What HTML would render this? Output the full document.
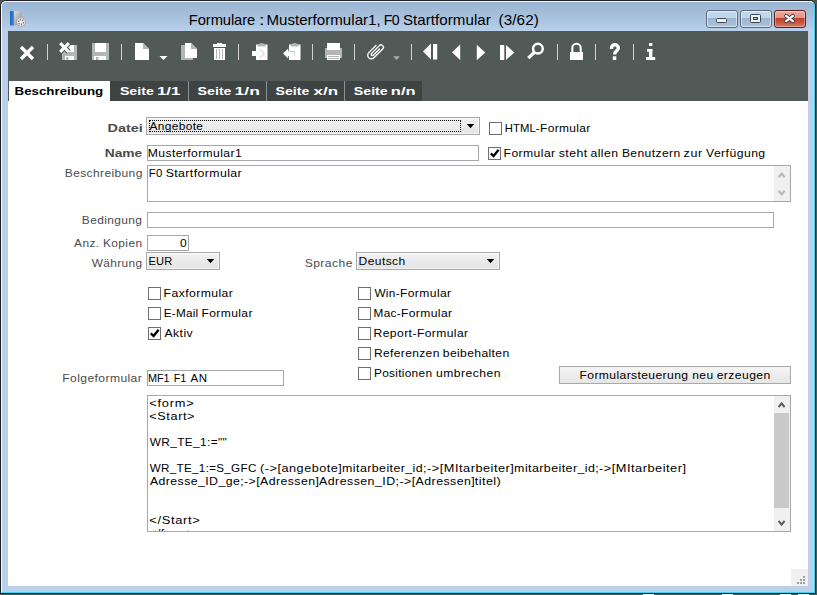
<!DOCTYPE html>
<html><head><meta charset="utf-8"><style>
*{box-sizing:border-box}
html,body{margin:0;padding:0}
body{width:817px;height:595px;overflow:hidden;position:relative;background:#4f5856;font-family:"Liberation Sans",sans-serif}
.a{position:absolute}
#win{left:0;top:0;width:816px;height:594px;border:1px solid #202020;border-radius:6px 6px 0 0;background:#b9d1ea;overflow:hidden}
#hl{left:0;top:0;width:814px;height:592px;border:1px solid #f4f8fc;border-right-color:#3ad6f4;border-bottom-color:#3ad6f4;border-radius:5px 5px 0 0;background:linear-gradient(#99b4d1 0px,#a9c2de 16px,#b9d1ea 30px,#b9d1ea 100%)}
#tb{left:8px;top:31px;width:800px;height:70px;background:#525a58}
#content{left:8px;top:101px;width:800px;height:485px;background:#fff}
.tab{position:absolute;top:81px;height:20px;background:#3e4444}
.t{position:absolute;white-space:pre;transform-origin:0 0}
.inp{position:absolute;background:#fff;border:1px solid #a4a7ad}
.sel{position:absolute;border:1px solid #a8a8a8;background:linear-gradient(#f2f2f2,#e3e3e3);box-shadow:inset 0 0 0 1px rgba(255,255,255,0.55)}
.cb{position:absolute;width:13px;height:13px;border:1px solid #6f6f6f;background:#fff}
</style></head><body>
<div id="win" class="a"><div id="hl" class="a"></div></div>
<!-- caption buttons -->
<div class="a" style="left:706px;top:10px;width:32px;height:18px;border:1px solid #5b6a80;border-radius:3px;overflow:hidden;background:linear-gradient(#c5d8ed 0,#c0d4ea 7px,#9cb5d1 7px,#a8c0da 14px,#b5cce4 17px)"><div class="a" style="left:0;top:0;width:30px;height:16px;border:1px solid rgba(255,255,255,0.55);border-radius:2px"></div></div>
<div class="a" style="left:740px;top:10px;width:32px;height:18px;border:1px solid #5b6a80;border-radius:3px;overflow:hidden;background:linear-gradient(#c5d8ed 0,#c0d4ea 7px,#9cb5d1 7px,#a8c0da 14px,#b5cce4 17px)"><div class="a" style="left:0;top:0;width:30px;height:16px;border:1px solid rgba(255,255,255,0.55);border-radius:2px"></div></div>
<div class="a" style="left:774px;top:10px;width:32px;height:18px;border:1px solid #5e1f1f;border-radius:3px;overflow:hidden;background:linear-gradient(#eaab9f 0,#e39282 7px,#c0402a 7px,#c65239 11px,#d98370 17px)"><div class="a" style="left:0;top:0;width:30px;height:16px;border:1px solid rgba(255,255,255,0.35);border-radius:2px"></div></div>
<svg class="a" style="left:700px;top:8px" width="110" height="22">
<rect x="16.5" y="10.5" width="10" height="4" rx="1" fill="#f2f0ec" stroke="#3e4656" stroke-width="1"/>
<rect x="50.5" y="6.5" width="10" height="8" rx="1" fill="#f2f0ec" stroke="#3e4656" stroke-width="1"/>
<rect x="53.5" y="9.5" width="4" height="2" fill="#9cb5d1" stroke="#3e4656" stroke-width="1"/>
<path d="M86.1,7.9 L92.9,13.1 M92.9,7.9 L86.1,13.1" stroke="#3c3a48" stroke-width="3.9" stroke-linecap="round"/><path d="M86.1,7.9 L92.9,13.1 M92.9,7.9 L86.1,13.1" stroke="#f6f6f6" stroke-width="2.4" stroke-linecap="round"/>

</svg>
<!-- app icon -->
<svg class="a" style="left:8px;top:9px" width="20" height="20">
<defs><linearGradient id="pg" x1="0" x2="1" y1="0" y2="1"><stop offset="0" stop-color="#dcdcdc"/><stop offset="1" stop-color="#8c8c8c"/></linearGradient>
<linearGradient id="bl" x1="0" x2="1"><stop offset="0" stop-color="#1d64b8"/><stop offset="1" stop-color="#3a8ee0"/></linearGradient></defs>
<rect x="2" y="2" width="4" height="14.5" rx="0.8" fill="url(#bl)"/>
<rect x="6" y="2" width="8" height="14" fill="url(#pg)"/>
<circle cx="13" cy="13" r="4.4" fill="#dcdcdc" stroke="#a0a0a0" stroke-width="1.3" stroke-dasharray="1.6,1.15"/><circle cx="13" cy="13" r="3.6" fill="#e6e6e6"/><circle cx="15.29" cy="13.71" r="0.75" fill="#6e6e6e"/><circle cx="13.53" cy="15.34" r="0.75" fill="#6e6e6e"/><circle cx="11.24" cy="14.63" r="0.75" fill="#6e6e6e"/><circle cx="10.71" cy="12.29" r="0.75" fill="#6e6e6e"/><circle cx="12.47" cy="10.66" r="0.75" fill="#6e6e6e"/><circle cx="14.76" cy="11.37" r="0.75" fill="#6e6e6e"/><circle cx="13" cy="13" r="0.9" fill="#f8f8f8"/>
</svg>


<div id="tb" class="a"></div>
<div id="content" class="a"></div>
<svg class="a" style="left:0;top:0" width="817" height="100" viewBox="0 0 817 100" shape-rendering="geometricPrecision">
<g fill="#fff">
<!-- X close -->
<path d="M21,47 L33,59 M33,47 L21,59" stroke="#fff" stroke-width="3.3" fill="none"/>
<!-- delete save: disk -->
<rect x="62" y="45" width="15" height="15" fill="#b3b6b5"/>
<rect x="64.5" y="45" width="9.5" height="7" fill="#fff"/>
<rect x="65" y="56" width="9" height="4" fill="#fff"/>
<rect x="66" y="57" width="2.5" height="3" fill="#b3b6b5"/>
<path d="M60.2,43.2 L68.8,51.8 M68.8,43.2 L60.2,51.8" stroke="#525a58" stroke-width="5.4" fill="none"/>
<path d="M60.2,43.2 L68.8,51.8 M68.8,43.2 L60.2,51.8" stroke="#fff" stroke-width="3.1" fill="none"/>
<!-- save -->
<rect x="92" y="43" width="17" height="17" fill="#b3b6b5"/>
<rect x="95" y="43" width="11" height="9" fill="#fff"/>
<rect x="94" y="56" width="12" height="4" fill="#fff"/>
<rect x="96" y="57" width="2.5" height="3" fill="#b3b6b5"/>
<!-- new doc -->
<path d="M135,43 H143 L149,49 V60 H135 Z"/>
<path d="M143,43 L149,49 H143 Z" fill="#b3b6b5"/>
<path d="M159.5,56 H167.5 L163.5,60 Z"/>
<!-- copy -->
<rect x="181" y="45" width="12" height="15" fill="#b3b6b5"/>
<path d="M185,43 H191 L197,49 V58 H185 Z"/>
<path d="M191,43 L197,49 H191 Z" fill="#b3b6b5"/>
<!-- trash -->
<rect x="213" y="44" width="13" height="3"/>
<rect x="217" y="43" width="5" height="1.5"/>
<rect x="214" y="48" width="11" height="12"/>
<rect x="216" y="49" width="1" height="10" fill="#b3b6b5"/>
<rect x="219" y="49" width="1" height="10" fill="#b3b6b5"/>
<rect x="222" y="49" width="1" height="10" fill="#b3b6b5"/>
<!-- import -->
<rect x="256" y="44.5" width="11.5" height="15.5"/>
<path d="M257.8,46.6 V45.2 Q258.3,43.4 261.6,43 Q264.9,43.4 265.4,45.2 V46.6 Z" fill="#b3b6b5"/>
<path d="M252,51 H259 V48.3 L264.7,53.5 L259,58.5 V56 H252 Z" stroke="#d6d8d7" stroke-width="0"/>
<path d="M259.5,48.8 L264.5,53.5 L259.5,58" stroke="#c8cac9" stroke-width="1" fill="none"/>
<!-- export -->
<rect x="289" y="44.5" width="11.5" height="15.5"/>
<path d="M290.8,46.6 V45.2 Q291.3,43.4 294.6,43 Q297.9,43.4 298.4,45.2 V46.6 Z" fill="#b3b6b5"/>
<path d="M283,53.5 L288.2,48.5 V51 H295 V56 H288.2 V58.5 Z"/>
<path d="M288.5,51.5 H294.5 V55.5" stroke="#c8cac9" stroke-width="1" fill="none"/>
<!-- printer -->
<rect x="325" y="48" width="17" height="10" fill="#b3b6b5"/>
<rect x="327" y="43" width="13" height="7"/>
<rect x="327" y="55" width="13" height="5"/>
<rect x="328" y="56" width="11" height="1" fill="#b3b6b5"/>
<rect x="328" y="58" width="11" height="1" fill="#b3b6b5"/>
<!-- paperclip -->
<path d="M375.97,45.47 L368.79,52.64 A3.6,3.6 0 0 0 373.88,57.74 L382.69,48.93 A2.35,2.35 0 0 0 379.36,45.61 L371.51,53.46 A1.25,1.25 0 0 0 373.28,55.23 L379.50,49.00" stroke="#fff" stroke-width="1.3" fill="none" stroke-linecap="round"/>
<path d="M393,56.2 H400 L396.5,60 Z" fill="#a6aaa9"/>
<!-- first -->
<path d="M423,51.5 L431,43.5 V59.5 Z"/>
<rect x="433" y="44" width="4.2" height="15.5"/>
<!-- prev -->
<path d="M452,52.3 L460.2,44.6 V60 Z"/>
<!-- next -->
<path d="M476.8,44.7 L485.2,52.5 L476.8,60.3 Z"/>
<!-- last -->
<rect x="500" y="45" width="4.3" height="15"/>
<path d="M506,45 L514.3,52.4 L506,60 Z"/>
<!-- search -->
<circle cx="537.9" cy="48.7" r="4.85" stroke="#fff" stroke-width="2.5" fill="none"/>
<path d="M534.4,52.2 L528.3,58.1" stroke="#fff" stroke-width="3.3" fill="none"/>
<!-- lock -->
<rect x="570" y="52" width="13" height="8"/>
<path d="M572.3,52.5 V48 A4.2,4.2 0 0 1 580.7,48 V52.5" stroke="#fff" stroke-width="2.1" fill="none"/>
<!-- question -->
<path d="M611.5,49 V47.9 A3.4,3.2 0 0 1 618.3,47.9 C618.3,50.6 614.6,51 614.6,54.4" stroke="#fff" stroke-width="3.4" fill="none"/>
<rect x="612.8" y="56.3" width="3.5" height="3.7"/>
<!-- info -->
<rect x="649" y="43" width="3.3" height="3"/>
<rect x="647" y="49" width="5.3" height="2.8"/>
<rect x="649" y="49" width="3.3" height="8.5"/>
<rect x="646" y="57" width="9.2" height="3"/>
</g>
<g fill="#d2d4d3">
<rect x="47" y="44" width="1" height="16"/>
<rect x="121" y="44" width="1" height="16"/>
<rect x="238" y="44" width="1" height="16"/>
<rect x="312" y="44" width="1" height="16"/>
<rect x="354" y="44" width="1" height="16"/>
<rect x="411" y="44" width="1" height="16"/>
<rect x="557" y="44" width="1" height="16"/>
<rect x="595" y="44" width="1" height="16"/>
<rect x="633" y="44" width="1" height="16"/>
</g>
</svg>

<div class="tab" style="left:9px;width:101px;background:#fff"></div>
<div class="tab" style="left:110px;width:78px"></div>
<div class="a" style="left:188px;top:81px;width:1px;height:20px;background:#8b9090"></div>
<div class="tab" style="left:189px;width:77px"></div>
<div class="a" style="left:266px;top:81px;width:1px;height:20px;background:#8b9090"></div>
<div class="tab" style="left:267px;width:77px"></div>
<div class="a" style="left:344px;top:81px;width:1px;height:20px;background:#8b9090"></div>
<div class="tab" style="left:345px;width:77px"></div>

<div class="sel" style="left:146px;top:117px;width:334px;height:18px"></div>
<div class="a" style="left:149px;top:120px;width:312px;height:12px;border:1px dotted #000"></div>
<svg class="a" style="left:466px;top:123px" width="10" height="6"><path d="M0.8,1 H8.2 L4.5,5.2 Z" fill="#000"/></svg>
<div class="cb" style="left:489px;top:122px"></div>

<div class="inp" style="left:147px;top:145px;width:332px;height:16px"></div>
<div class="cb" style="left:488px;top:147px"></div>
<svg class="a" style="left:488px;top:147px" width="13" height="13"><path d="M2.8,6.3 L5.6,9 L10.6,2.8" stroke="#000" stroke-width="2.3" fill="none"/></svg>

<div class="inp" style="left:147px;top:165px;width:644px;height:37px"></div>
<div class="a" style="left:774px;top:166px;width:16px;height:35px;background:#f0f0f0"></div>
<svg class="a" style="left:774px;top:166px" width="16" height="35"><path d="M4.6,11.4 L7.6,7.6 L10.6,11.4" stroke="#b9b9b9" stroke-width="2.1" fill="none"/><path d="M4.6,24.6 L7.6,28.4 L10.6,24.6" stroke="#b9b9b9" stroke-width="2.1" fill="none"/></svg>

<div class="inp" style="left:147px;top:212px;width:627px;height:16px"></div>
<div class="inp" style="left:147px;top:235px;width:42px;height:16px"></div>

<div class="sel" style="left:146px;top:252px;width:74px;height:18px"></div>
<svg class="a" style="left:206px;top:258px" width="10" height="6"><path d="M0.8,1 H8.2 L4.5,5.2 Z" fill="#000"/></svg>
<div class="sel" style="left:356px;top:252px;width:144px;height:18px"></div>
<svg class="a" style="left:486px;top:258px" width="10" height="6"><path d="M0.8,1 H8.2 L4.5,5.2 Z" fill="#000"/></svg>

<div class="cb" style="left:148px;top:287px"></div>
<div class="cb" style="left:148px;top:307px"></div>
<div class="cb" style="left:148px;top:327px"></div>
<svg class="a" style="left:148px;top:327px" width="13" height="13"><path d="M2.8,6.3 L5.6,9 L10.6,2.8" stroke="#000" stroke-width="2.3" fill="none"/></svg>
<div class="cb" style="left:358px;top:287px"></div>
<div class="cb" style="left:358px;top:307px"></div>
<div class="cb" style="left:358px;top:327px"></div>
<div class="cb" style="left:358px;top:347px"></div>
<div class="cb" style="left:358px;top:367px"></div>

<div class="inp" style="left:147px;top:370px;width:137px;height:16px"></div>
<div class="a" style="left:559px;top:366px;width:232px;height:18px;border:1px solid #a9a9a9;background:linear-gradient(#f4f4f4,#e6e6e6)"></div>

<div class="inp" style="left:147px;top:395px;width:644px;height:137px"></div>
<div class="a" style="left:774px;top:396px;width:16px;height:135px;background:#f0f0f0"></div>
<div class="a" style="left:774px;top:413px;width:15px;height:95px;background:#c9c9c9"></div>
<svg class="a" style="left:774px;top:396px" width="16" height="135"><path d="M4.6,11.2 L7.6,7.4 L10.6,11.2" stroke="#5c5c5c" stroke-width="2.1" fill="none"/><path d="M4.6,124.8 L7.6,128.6 L10.6,124.8" stroke="#5c5c5c" stroke-width="2.1" fill="none"/></svg>

<div class="a" style="left:791px;top:569px;width:17px;height:17px;background:#f0f0f0"></div>
<div class="a" style="left:643px;top:594px;width:11px;height:1px;background:#f4f4f4"></div>
<div class="a" style="left:722px;top:594px;width:11px;height:1px;background:#f4f4f4"></div>
<div class="a" style="left:780px;top:594px;width:11px;height:1px;background:#f4f4f4"></div>
<div class="a" style="left:798px;top:594px;width:11px;height:1px;background:#f4f4f4"></div>
<div class="a" style="left:803px;top:576px;width:2px;height:2px;background:#a3a3a3"></div>
<div class="a" style="left:800px;top:579px;width:2px;height:2px;background:#a3a3a3"></div>
<div class="a" style="left:803px;top:579px;width:2px;height:2px;background:#a3a3a3"></div>
<div class="a" style="left:797px;top:582px;width:2px;height:2px;background:#a3a3a3"></div>
<div class="a" style="left:800px;top:582px;width:2px;height:2px;background:#a3a3a3"></div>
<div class="a" style="left:803px;top:582px;width:2px;height:2px;background:#a3a3a3"></div>

<div class="t" style="left:188.00px;top:11px;font-size:15px;line-height:18px;color:#000;letter-spacing:-0.097px;transform:translateX(0.821px) scaleX(0.9829);">Formulare</div><div class="t" style="left:259.00px;top:11px;font-size:15px;line-height:18px;color:#000;letter-spacing:0.238px;transform:translateX(0.120px) scaleX(1.3429);">:</div><div class="t" style="left:266.00px;top:11px;font-size:15px;line-height:18px;color:#000;letter-spacing:0.024px;transform:translateX(0.394px) scaleX(1.0049);">Musterformular1,</div><div class="t" style="left:383.00px;top:11px;font-size:15px;line-height:18px;color:#000;letter-spacing:-0.636px;transform:translateX(0.769px) scaleX(0.9427);">F0</div><div class="t" style="left:402.00px;top:11px;font-size:15px;line-height:18px;color:#000;letter-spacing:0.036px;transform:translateX(0.995px) scaleX(1.0077);">Startformular</div><div class="t" style="left:498.00px;top:11px;font-size:15px;line-height:18px;color:#000;letter-spacing:0.079px;transform:translateX(0.586px) scaleX(1.0160);">(3/62)</div><div class="t" style="left:14.00px;top:85px;font-size:11px;line-height:13px;color:#000;font-weight:bold;letter-spacing:0.000px;transform:translateX(0.554px) scaleX(1.2086);">Beschreibung</div><div class="t" style="left:119.00px;top:85px;font-size:11px;line-height:13px;color:#fff;font-weight:bold;letter-spacing:0.000px;transform:translateX(0.913px) scaleX(1.2891);">Seite</div><div class="t" style="left:156.00px;top:85px;font-size:11px;line-height:13px;color:#fff;font-weight:bold;letter-spacing:0.000px;transform:translateX(0.933px) scaleX(1.5245);">1/1</div><div class="t" style="left:197.00px;top:85px;font-size:11px;line-height:13px;color:#fff;font-weight:bold;letter-spacing:0.000px;transform:translateX(0.613px) scaleX(1.2891);">Seite</div><div class="t" style="left:234.00px;top:85px;font-size:11px;line-height:13px;color:#fff;font-weight:bold;letter-spacing:0.000px;transform:translateX(0.585px) scaleX(1.5931);">1/n</div><div class="t" style="left:275.00px;top:85px;font-size:11px;line-height:13px;color:#fff;font-weight:bold;letter-spacing:0.000px;transform:translateX(0.513px) scaleX(1.2891);">Seite</div><div class="t" style="left:313.00px;top:85px;font-size:11px;line-height:13px;color:#fff;font-weight:bold;letter-spacing:0.000px;transform:translateX(0.445px) scaleX(1.5497);">x/n</div><div class="t" style="left:353.00px;top:85px;font-size:11px;line-height:13px;color:#fff;font-weight:bold;letter-spacing:0.000px;transform:translateX(0.813px) scaleX(1.2891);">Seite</div><div class="t" style="left:390.00px;top:85px;font-size:11px;line-height:13px;color:#fff;font-weight:bold;letter-spacing:0.000px;transform:translateX(0.852px) scaleX(1.4967);">n/n</div><div class="t" style="left:107.00px;top:122px;font-size:11px;line-height:13px;color:#4b4b4b;font-weight:bold;letter-spacing:0.000px;transform:translateX(0.582px) scaleX(1.3110);">Datei</div><div class="t" style="left:104.00px;top:147px;font-size:11px;line-height:13px;color:#4b4b4b;font-weight:bold;letter-spacing:0.000px;transform:translateX(0.723px) scaleX(1.2526);">Name</div><div class="t" style="left:64.00px;top:167px;font-size:11px;line-height:13px;color:#4b4b4b;letter-spacing:0.336px;transform:translateX(0.817px) scaleX(1.0924);">Beschreibung</div><div class="t" style="left:81.00px;top:214px;font-size:11px;line-height:13px;color:#4b4b4b;letter-spacing:0.340px;transform:translateX(0.822px) scaleX(1.0871);">Bedingung</div><div class="t" style="left:74.00px;top:237px;font-size:11px;line-height:13px;color:#4b4b4b;letter-spacing:0.357px;transform:translateX(0.100px) scaleX(1.0829);">Anz.</div><div class="t" style="left:103.00px;top:237px;font-size:11px;line-height:13px;color:#4b4b4b;letter-spacing:0.339px;transform:translateX(0.024px) scaleX(1.0847);">Kopien</div><div class="t" style="left:91.00px;top:257px;font-size:11px;line-height:13px;color:#4b4b4b;letter-spacing:0.347px;transform:translateX(0.692px) scaleX(1.0767);">Währung</div><div class="t" style="left:304.00px;top:257px;font-size:11px;line-height:13px;color:#4b4b4b;letter-spacing:0.406px;transform:translateX(0.650px) scaleX(1.1005);">Sprache</div><div class="t" style="left:62.00px;top:372px;font-size:11px;line-height:13px;color:#4b4b4b;letter-spacing:0.347px;transform:translateX(0.307px) scaleX(1.1033);">Folgeformular</div><div class="t" style="left:149.00px;top:120px;font-size:11px;line-height:13px;color:#000;letter-spacing:0.333px;transform:translateX(0.500px) scaleX(1.0811);">Angebote</div><div class="t" style="left:147.00px;top:147px;font-size:11px;line-height:13px;color:#000;letter-spacing:0.352px;transform:translateX(0.807px) scaleX(1.1038);">Musterformular1</div><div class="t" style="left:148.00px;top:167px;font-size:11px;line-height:13px;color:#000;letter-spacing:0.270px;transform:translateX(0.767px) scaleX(1.0365);">F0</div><div class="t" style="left:165.00px;top:167px;font-size:11px;line-height:13px;color:#000;letter-spacing:0.370px;transform:translateX(0.641px) scaleX(1.1183);">Startformular</div><div class="t" style="left:179.00px;top:237px;font-size:11px;line-height:13px;color:#000;letter-spacing:0.293px;transform:translateX(0.964px) scaleX(1.0906);">0</div><div class="t" style="left:148.00px;top:255px;font-size:11px;line-height:13px;color:#000;letter-spacing:0.079px;transform:translateX(0.590px) scaleX(1.0111);">EUR</div><div class="t" style="left:358.00px;top:255px;font-size:11px;line-height:13px;color:#000;letter-spacing:0.372px;transform:translateX(0.615px) scaleX(1.0946);">Deutsch</div><div class="t" style="left:148.00px;top:372px;font-size:11px;line-height:13px;color:#000;letter-spacing:-0.101px;transform:translateX(0.113px) scaleX(0.9854);">MF1</div><div class="t" style="left:173.00px;top:372px;font-size:11px;line-height:13px;color:#000;letter-spacing:-0.122px;transform:translateX(0.814px) scaleX(0.9842);">F1</div><div class="t" style="left:190.00px;top:372px;font-size:11px;line-height:13px;color:#000;letter-spacing:0.384px;transform:translateX(0.600px) scaleX(1.0417);">AN</div><div class="t" style="left:504.00px;top:122px;font-size:11px;line-height:13px;color:#000;letter-spacing:0.127px;transform:translateX(0.678px) scaleX(1.0242);">HTML-</div><div class="t" style="left:540.00px;top:122px;font-size:11px;line-height:13px;color:#000;letter-spacing:0.326px;transform:translateX(0.022px) scaleX(1.0867);">Formular</div><div class="t" style="left:503.00px;top:147px;font-size:11px;line-height:13px;color:#000;letter-spacing:0.383px;transform:translateX(0.607px) scaleX(1.1035);">Formular</div><div class="t" style="left:558.00px;top:147px;font-size:11px;line-height:13px;color:#000;letter-spacing:0.404px;transform:translateX(0.766px) scaleX(1.1149);">steht</div><div class="t" style="left:590.00px;top:147px;font-size:11px;line-height:13px;color:#000;letter-spacing:0.361px;transform:translateX(0.545px) scaleX(1.1091);">allen</div><div class="t" style="left:621.00px;top:147px;font-size:11px;line-height:13px;color:#000;letter-spacing:0.364px;transform:translateX(0.911px) scaleX(1.0990);">Benutzern</div><div class="t" style="left:683.00px;top:147px;font-size:11px;line-height:13px;color:#000;letter-spacing:0.566px;transform:translateX(0.548px) scaleX(1.1306);">zur</div><div class="t" style="left:705.00px;top:147px;font-size:11px;line-height:13px;color:#000;letter-spacing:0.402px;transform:translateX(0.989px) scaleX(1.1083);">Verfügung</div><div class="t" style="left:163.00px;top:287px;font-size:11px;line-height:13px;color:#000;letter-spacing:0.375px;transform:translateX(0.602px) scaleX(1.1083);">Faxformular</div><div class="t" style="left:163.00px;top:307px;font-size:11px;line-height:13px;color:#000;letter-spacing:0.240px;transform:translateX(0.741px) scaleX(1.0651);">E-Mail</div><div class="t" style="left:201.00px;top:307px;font-size:11px;line-height:13px;color:#000;letter-spacing:0.355px;transform:translateX(0.514px) scaleX(1.0951);">Formular</div><div class="t" style="left:164.00px;top:327px;font-size:11px;line-height:13px;color:#000;letter-spacing:0.388px;transform:translateX(0.500px) scaleX(1.1084);">Aktiv</div><div class="t" style="left:374.00px;top:287px;font-size:11px;line-height:13px;color:#000;letter-spacing:0.324px;transform:translateX(0.393px) scaleX(1.0709);">Win-</div><div class="t" style="left:399.00px;top:287px;font-size:11px;line-height:13px;color:#000;letter-spacing:0.369px;transform:translateX(0.911px) scaleX(1.0993);">Formular</div><div class="t" style="left:373.00px;top:307px;font-size:11px;line-height:13px;color:#000;letter-spacing:0.325px;transform:translateX(0.539px) scaleX(1.0678);">Mac-</div><div class="t" style="left:400.00px;top:307px;font-size:11px;line-height:13px;color:#000;letter-spacing:0.364px;transform:translateX(0.912px) scaleX(1.0979);">Formular</div><div class="t" style="left:373.00px;top:327px;font-size:11px;line-height:13px;color:#000;letter-spacing:0.368px;transform:translateX(0.507px) scaleX(1.1037);">Report-</div><div class="t" style="left:416.00px;top:327px;font-size:11px;line-height:13px;color:#000;letter-spacing:0.364px;transform:translateX(0.912px) scaleX(1.0979);">Formular</div><div class="t" style="left:373.00px;top:347px;font-size:11px;line-height:13px;color:#000;letter-spacing:0.342px;transform:translateX(0.918px) scaleX(1.0911);">Referenzen</div><div class="t" style="left:442.00px;top:347px;font-size:11px;line-height:13px;color:#000;letter-spacing:0.338px;transform:translateX(0.830px) scaleX(1.1005);">beibehalten</div><div class="t" style="left:373.00px;top:367px;font-size:11px;line-height:13px;color:#000;letter-spacing:0.272px;transform:translateX(0.928px) scaleX(1.0795);">Positionen</div><div class="t" style="left:436.00px;top:367px;font-size:11px;line-height:13px;color:#000;letter-spacing:0.417px;transform:translateX(0.028px) scaleX(1.1030);">umbrechen</div><div class="t" style="left:579.00px;top:369px;font-size:11px;line-height:13px;color:#000;letter-spacing:0.350px;transform:translateX(0.509px) scaleX(1.1012);">Formularsteuerung</div><div class="t" style="left:692.00px;top:369px;font-size:11px;line-height:13px;color:#000;letter-spacing:0.442px;transform:translateX(0.140px) scaleX(1.0852);">neu</div><div class="t" style="left:716.00px;top:369px;font-size:11px;line-height:13px;color:#000;letter-spacing:0.394px;transform:translateX(0.649px) scaleX(1.1020);">erzeugen</div>
<div class="a" style="left:148px;top:396px;width:625px;height:135px;overflow:hidden"><div class="a" style="left:-148px;top:-396px;width:817px;height:595px"><div class="t" style="left:149.00px;top:397px;font-size:11px;line-height:13px;color:#000;letter-spacing:0.639px;transform:translateX(0.317px) scaleX(1.1651);">&lt;form&gt;</div><div class="t" style="left:149.00px;top:410px;font-size:11px;line-height:13px;color:#000;letter-spacing:0.515px;transform:translateX(0.324px) scaleX(1.1526);">&lt;Start&gt;</div><div class="t" style="left:149.00px;top:436px;font-size:11px;line-height:13px;color:#000;letter-spacing:0.330px;transform:translateX(0.792px) scaleX(1.0791);">WR_TE_1:=&quot;&quot;</div><div class="t" style="left:149.00px;top:462px;font-size:11px;line-height:13px;color:#000;letter-spacing:0.279px;transform:translateX(0.794px) scaleX(1.0598);">WR_TE_1:=S_GFC</div><div class="t" style="left:260.00px;top:462px;font-size:11px;line-height:13px;color:#000;letter-spacing:0.459px;transform:translateX(0.097px) scaleX(1.1477);">(-&gt;[angebote]</div><div class="t" style="left:342.00px;top:462px;font-size:11px;line-height:13px;color:#000;letter-spacing:0.367px;transform:translateX(0.110px) scaleX(1.1279);">mitarbeiter_id;</div><div class="t" style="left:427.00px;top:462px;font-size:11px;line-height:13px;color:#000;letter-spacing:0.441px;transform:translateX(0.020px) scaleX(1.1591);">-&gt;[MItarbeiter]</div><div class="t" style="left:514.00px;top:462px;font-size:11px;line-height:13px;color:#000;letter-spacing:0.374px;transform:translateX(0.109px) scaleX(1.1306);">mitarbeiter_id;</div><div class="t" style="left:598.00px;top:462px;font-size:11px;line-height:13px;color:#000;letter-spacing:0.445px;transform:translateX(0.920px) scaleX(1.1609);">-&gt;[MItarbeiter]</div><div class="t" style="left:149.00px;top:475px;font-size:11px;line-height:13px;color:#000;letter-spacing:0.391px;transform:translateX(0.900px) scaleX(1.1163);">Adresse_ID_ge;-&gt;[Adressen]</div><div class="t" style="left:319.00px;top:475px;font-size:11px;line-height:13px;color:#000;letter-spacing:0.407px;transform:translateX(0.100px) scaleX(1.1228);">Adressen_ID;-&gt;[Adressen]</div><div class="t" style="left:474.00px;top:475px;font-size:11px;line-height:13px;color:#000;letter-spacing:0.348px;transform:translateX(0.870px) scaleX(1.1508);">titel)</div><div class="t" style="left:149.00px;top:514px;font-size:11px;line-height:13px;color:#000;letter-spacing:0.540px;transform:translateX(0.313px) scaleX(1.1748);">&lt;/Start&gt;</div><div class="t" style="left:149.00px;top:527px;font-size:11px;line-height:13px;color:#000;letter-spacing:0.397px;transform:translateX(0.346px) scaleX(1.1073);">&lt;/form&gt;</div></div></div>
</body></html>
